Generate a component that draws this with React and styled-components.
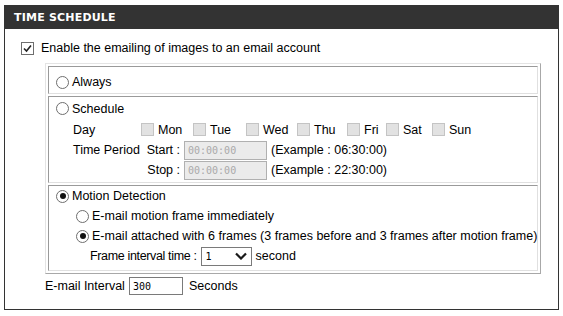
import React from 'react';
import styled, { createGlobalStyle } from 'styled-components';

const GlobalStyle = createGlobalStyle`
  body {
    margin: 0;
    background: #fff;
    font-family: "Liberation Sans", Arial, sans-serif;
    font-size: 12.5px;
    color: #000;
  }
`;

const Panel = styled.div`
  margin: 5px 0 0 4px;
  width: 553px;
  height: 304px;
  border: 1px solid #333;
  border-top: none;
`;

const Header = styled.div`
  height: 24px;
  margin: 0 -1px;
  background: #333;
  color: #fff;
  font-family: "DejaVu Sans", Verdana, sans-serif;
  font-weight: bold;
  font-size: 11px;
  letter-spacing: 0.2px;
  display: flex;
  align-items: center;
  padding-left: 10px;
`;

const EnableRow = styled.div`
  display: flex;
  align-items: center;
  height: 20px;
  margin: 9px 0 0 16px;
  gap: 7px;
`;

const Table = styled.div`
  margin: 5px 0 0 40px;
  width: 490px;
  padding: 2px;
  border: 1px solid;
  border-color: #e4e4e4 #a8a8a8 #a8a8a8 #e4e4e4;
  display: flex;
  flex-direction: column;
  gap: 2px;
`;

const Cell = styled.div`
  border: 1px solid;
  border-color: #9a9a9a #e0e0e0 #e0e0e0 #9a9a9a;
  padding: ${p => p.$pad || '1px 0 2px 7px'};
`;

const Line = styled.div`
  display: flex;
  align-items: center;
  height: ${p => p.$h || 20}px;
  padding-left: ${p => p.$indent || 0}px;
`;

const Label = styled.span`
  white-space: nowrap;
  width: ${p => (p.$w ? p.$w + 'px' : 'auto')};
  text-align: ${p => p.$align || 'left'};
  letter-spacing: ${p => (p.$tight ? '-0.35px' : 'normal')};
  flex: none;
`;

const Box = styled.span`
  width: 11px;
  height: 11px;
  border: 1px solid ${p => (p.$disabled ? '#c4c4c4' : '#6e6e6e')};
  background: ${p => (p.$disabled ? '#e2e2e2' : '#fff')};
  display: inline-flex;
  align-items: center;
  justify-content: center;
  flex: none;
`;

const Radio = styled.span`
  width: 11px;
  height: 11px;
  border: 1px solid #6e6e6e;
  border-radius: 50%;
  background: #fff;
  display: inline-flex;
  align-items: center;
  justify-content: center;
  flex: none;
  margin-right: 3px;
  &::after {
    content: '';
    width: 6px;
    height: 6px;
    border-radius: 50%;
    background: #111;
    display: ${p => (p.$on ? 'block' : 'none')};
  }
`;

const Day = styled.span`
  display: inline-flex;
  align-items: center;
  gap: 4px;
  width: ${p => p.$w}px;
  flex: none;
`;

const TimeInput = styled.span`
  width: 83px;
  height: 19px;
  box-sizing: border-box;
  border: 1px solid #b0b0b0;
  background: #ebebeb;
  color: #a9a9a9;
  font-family: "DejaVu Sans Mono", monospace;
  font-size: 10px;
  display: flex;
  align-items: center;
  padding-left: 3px;
  margin: 0 4px 0 4px;
  flex: none;
`;

const Select = styled.span`
  width: 51px;
  height: 19px;
  box-sizing: border-box;
  border: 1px solid #7a7a7a;
  background: #fff;
  display: flex;
  align-items: center;
  justify-content: space-between;
  padding: 0 4px 0 4px;
  margin: 0 4px 0 4px;
  font-family: "DejaVu Sans Mono", monospace;
  font-size: 10px;
  flex: none;
`;

const IntervalRow = styled.div`
  display: flex;
  align-items: center;
  height: 20px;
  margin: 2px 0 0 40px;
`;

const TextInput = styled.span`
  width: 54px;
  height: 18px;
  box-sizing: border-box;
  border: 1px solid #7a7a7a;
  background: #fff;
  font-family: "DejaVu Sans Mono", monospace;
  font-size: 10px;
  display: flex;
  align-items: center;
  padding-left: 3px;
  margin-right: 6px;
  flex: none;
`;

const Check = () => (
  <svg width="9" height="9" viewBox="0 0 9 9">
    <path d="M1 4.5 L3.5 7 L8 1.5" fill="none" stroke="#222" strokeWidth="1.6" />
  </svg>
);

const Chevron = () => (
  <svg width="12" height="8" viewBox="0 0 12 8">
    <path d="M1 1.5 L6 6.5 L11 1.5" fill="none" stroke="#1a1a1a" strokeWidth="2.2" />
  </svg>
);

const days = [
  ['Mon', 52],
  ['Tue', 53],
  ['Wed', 51],
  ['Thu', 50],
  ['Fri', 39],
  ['Sat', 46],
  ['Sun', 40],
];

export default function App() {
  return (
    <>
      <GlobalStyle />
      <Panel>
        <Header>TIME SCHEDULE</Header>
        <EnableRow>
          <Box>
            <Check />
          </Box>
          <Label>Enable the emailing of images to an email account</Label>
        </EnableRow>
        <Table>
          <Cell $pad="5px 0 1px 7px">
            <Line>
              <Radio />
              <Label>Always</Label>
            </Line>
          </Cell>
          <Cell>
            <Line $h={21}>
              <Radio />
              <Label>Schedule</Label>
            </Line>
            <Line $h={21} $indent={17}>
              <Label $w={68}>Day</Label>
              {days.map(([d, w]) => (
                <Day key={d} $w={w}>
                  <Box $disabled />
                  {d}
                </Day>
              ))}
            </Line>
            <Line $h={20} $indent={17}>
              <Label $w={63}>Time Period</Label>
              <Label $w={44} $align="right">Start :</Label>
              <TimeInput>00:00:00</TimeInput>
              <Label>(Example : 06:30:00)</Label>
            </Line>
            <Line $h={20} $indent={17}>
              <Label $w={107} $align="right">Stop :</Label>
              <TimeInput>00:00:00</TimeInput>
              <Label>(Example : 22:30:00)</Label>
            </Line>
          </Cell>
          <Cell $pad="0 0 4px 7px">
            <Line>
              <Radio $on />
              <Label>Motion Detection</Label>
            </Line>
            <Line $indent={20}>
              <Radio />
              <Label>E-mail motion frame immediately</Label>
            </Line>
            <Line $indent={20}>
              <Radio $on />
              <Label>E-mail attached with 6 frames (3 frames before and 3 frames after motion frame)</Label>
            </Line>
            <Line $indent={34}>
              <Label $tight>Frame interval time :</Label>
              <Select>
                1
                <Chevron />
              </Select>
              <Label>second</Label>
            </Line>
          </Cell>
        </Table>
        <IntervalRow>
          <Label $w={84}>E-mail Interval</Label>
          <TextInput>300</TextInput>
          <Label>Seconds</Label>
        </IntervalRow>
      </Panel>
    </>
  );
}
